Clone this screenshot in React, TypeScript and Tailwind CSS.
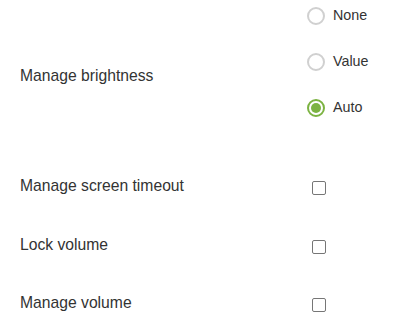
import React from 'react';

const options = ['None', 'Value', 'Auto'];
const toggles = ['Manage screen timeout', 'Lock volume', 'Manage volume'];

function Radio({ checked }: { checked: boolean }) {
  return checked ? (
    <span className="flex h-[18px] w-[18px] items-center justify-center rounded-full border-[2px] border-[#7cb342]">
      <span className="h-[10px] w-[10px] rounded-full bg-[#7cb342]" />
    </span>
  ) : (
    <span className="h-[18px] w-[18px] rounded-full border-[2px] border-[#d0d0d0]" />
  );
}

export default function App() {
  const selected = 'Auto';

  return (
    <div className="w-[401px] h-[322px] bg-white px-5 text-[#333] font-['Liberation_Sans',Arial,sans-serif] overflow-hidden">
      <div className="flex">
        <div className="w-[287px] pt-[67px] text-[15.7px] leading-[18px]">Manage brightness</div>
        <div className="flex flex-col gap-[28px] pt-[7px]">
          {options.map((o) => (
            <label key={o} className="flex h-[18px] items-center gap-[8px] text-[14.3px]">
              <Radio checked={o === selected} />
              <span>{o}</span>
            </label>
          ))}
        </div>
      </div>
      <div className="pt-[41px]">
        {toggles.map((t) => (
          <div key={t} className="flex h-[58.5px] items-center">
            <div className="w-[292px] text-[15.7px] leading-[18px] -mt-[2px]">{t}</div>
            <span className="mt-[2px] h-[14px] w-[14px] rounded-[2px] border border-[#767676] bg-white" />
          </div>
        ))}
      </div>
    </div>
  );
}
